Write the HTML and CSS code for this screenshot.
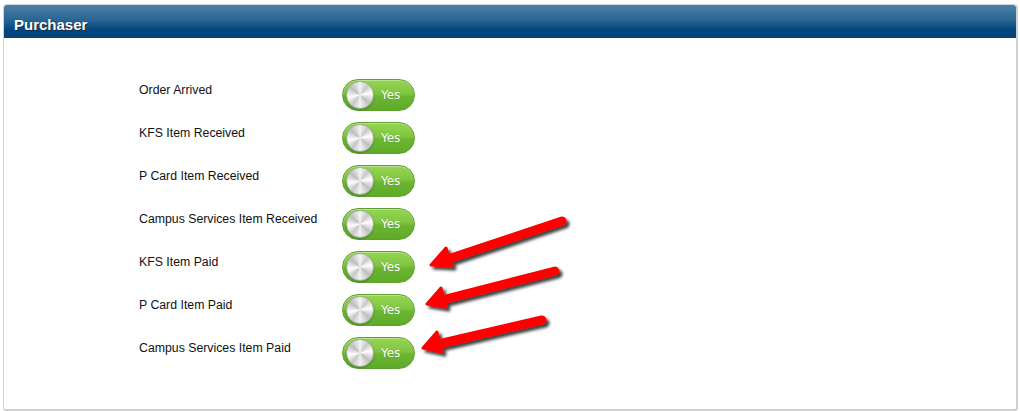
FILE: index.html
```html
<!DOCTYPE html>
<html>
<head>
<meta charset="utf-8">
<link rel="stylesheet" href="styles.css">
</head>
<body>
<div class="panel">
  <div class="panel-head">Purchaser</div>
  <div class="panel-body">
    <div class="rows">
      <div class="row"><div class="label">Order Arrived</div><div class="toggle"><span class="knob"></span><span class="yes">Yes</span></div></div>
      <div class="row"><div class="label">KFS Item Received</div><div class="toggle"><span class="knob"></span><span class="yes">Yes</span></div></div>
      <div class="row"><div class="label">P Card Item Received</div><div class="toggle"><span class="knob"></span><span class="yes">Yes</span></div></div>
      <div class="row"><div class="label">Campus Services Item Received</div><div class="toggle"><span class="knob"></span><span class="yes">Yes</span></div></div>
      <div class="row"><div class="label">KFS Item Paid</div><div class="toggle"><span class="knob"></span><span class="yes">Yes</span></div></div>
      <div class="row"><div class="label">P Card Item Paid</div><div class="toggle"><span class="knob"></span><span class="yes">Yes</span></div></div>
      <div class="row"><div class="label">Campus Services Item Paid</div><div class="toggle"><span class="knob"></span><span class="yes">Yes</span></div></div>
    </div>
  </div>
  <svg class="arrows" width="1020" height="411" viewBox="0 0 1020 411">
    <defs>
      <filter id="sh" x="-20%" y="-40%" width="140%" height="180%">
        <feGaussianBlur in="SourceAlpha" stdDeviation="1.6"/>
        <feOffset dx="3" dy="3" result="b"/>
        <feComponentTransfer><feFuncA type="linear" slope="0.75"/></feComponentTransfer>
        <feMerge><feMergeNode/><feMergeNode in="SourceGraphic"/></feMerge>
      </filter>
    </defs>
    <g filter="url(#sh)" fill="#ff0000" stroke="#ff0000" stroke-linecap="round" stroke-linejoin="round">
      <line x1="562" y1="221" x2="442" y2="261" stroke-width="9"/>
      <polygon points="431,265 446,248 452,266" stroke-width="3"/>
      <line x1="555" y1="271" x2="438" y2="301" stroke-width="9"/>
      <polygon points="427,304 441,288 446,307" stroke-width="3"/>
      <line x1="542" y1="320" x2="434" y2="345" stroke-width="9"/>
      <polygon points="423,348 437,332 442,352" stroke-width="3"/>
    </g>
  </svg>
</div>
</body>
</html>
```

FILE: styles.css
```css
html, body {
  margin: 0;
  padding: 0;
  background: #ffffff;
}
body {
  width: 1020px;
  height: 411px;
  overflow: hidden;
  font-family: "Liberation Sans", Arial, sans-serif;
}
.panel {
  position: relative;
  margin: 4px 0 0 3px;
  width: 1012px;
  height: 404px;
  border: 1px solid #d4d4d4;
  border-right: 2px solid #d0d0d0;
  border-bottom: 2px solid #d0d0d0;
  border-radius: 4px 4px 3px 3px;
  background: #fff;
}
.panel-head {
  height: 33px;
  line-height: 39px;
  padding-left: 10px;
  color: #fff;
  font-weight: bold;
  font-size: 15px;
  text-shadow: 1px 1px 0 #1a2a3a;
  background: linear-gradient(to bottom, #4c80a8 0%, #2a6592 45%, #02467e 75%, #01447c 100%);
  border-radius: 3px 3px 0 0;
}
.panel-body {
  padding: 41px 0 0 135px;
}
.rows {
  display: flex;
  flex-direction: column;
  gap: 11px;
}
.row {
  display: grid;
  grid-template-columns: 203px 74px;
  align-items: start;
}
.label {
  font-size: 12.3px;
  color: #111;
  padding-top: 4px;
  line-height: 14px;
}
.toggle {
  position: relative;
  width: 71px;
  height: 30px;
  border: 1px solid #5fa02f;
  border-radius: 17px;
  background: linear-gradient(to bottom, #95d652 0%, #80c540 45%, #6cb532 55%, #5eab2a 100%);
  box-shadow: inset 0 1px 0 rgba(255,255,255,0.35);
  display: flex;
  align-items: center;
}
.knob {
  margin-left: 3px;
  width: 26px;
  height: 26px;
  border-radius: 50%;
  border: 1px solid #a4b09c;
  background:
    radial-gradient(circle at 50% 50%, rgba(255,255,255,0.6) 0, rgba(255,255,255,0) 3px),
    conic-gradient(from 0deg, #f4f4f4, #c8c8c8 40deg, #ffffff 80deg, #bfbfbf 130deg, #f2f2f2 180deg, #c6c6c6 220deg, #ffffff 260deg, #bdbdbd 310deg, #f4f4f4 360deg);
  box-shadow: 0 1px 2px rgba(0,0,0,0.25);
}
.yes {
  margin-left: 7px;
  color: #fff;
  font-size: 12px;
  font-family: "DejaVu Sans", "Liberation Sans", sans-serif;
  text-shadow: 0 0 1px rgba(60,110,20,0.5);
}
.arrows {
  position: absolute;
  left: -4px;
  top: -5px;
  pointer-events: none;
}
```
